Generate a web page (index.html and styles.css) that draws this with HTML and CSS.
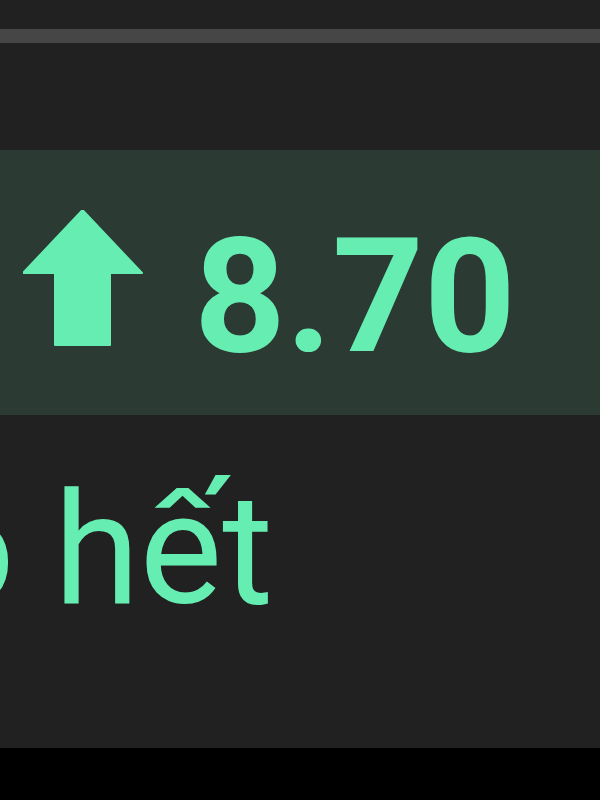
FILE: index.html
```html
<!DOCTYPE html>
<html lang="vi">
<head>
<meta charset="utf-8">
<link rel="stylesheet" href="styles.css">
</head>
<body>
<div class="screen">
  <div class="rule"></div>
  <div class="band">
    <svg class="arrow" width="120" height="136" viewBox="0 0 120 136">
      <polygon points="59.5,0 119,63 87,63 87,135 32,135 32,63 0,63" fill="#66eeb2" stroke="#66eeb2" stroke-width="2" stroke-linejoin="round"/>
    </svg>
    <span class="value">8.70</span>
  </div>
  <div class="label">o hết</div>
</div>
</body>
</html>
```
FILE: styles.css
```css
html, body {
  margin: 0;
  padding: 0;
  background: #000;
}
.screen {
  height: 748px;
  background: #212121;
  padding-top: 29px;
  box-sizing: border-box;
  overflow: hidden;
  font-family: Roboto, "Noto Sans", sans-serif;
  color: #66eeb2;
}
.rule {
  height: 14px;
  background: #464646;
}
.band {
  margin-top: 107px;
  height: 265px;
  background: #2c3a34;
  display: flex;
  align-items: flex-start;
  padding-left: 23px;
}
.arrow {
  display: block;
  margin-top: 60px;
  flex: none;
}
.value {
  margin-left: 51px;
  margin-top: 67px;
  font-size: 160px;
  line-height: 1;
  font-weight: 700;
}
.label {
  margin-top: 57px;
  margin-left: -74px;
  font-size: 156px;
  line-height: 1;
  white-space: nowrap;
}
```
